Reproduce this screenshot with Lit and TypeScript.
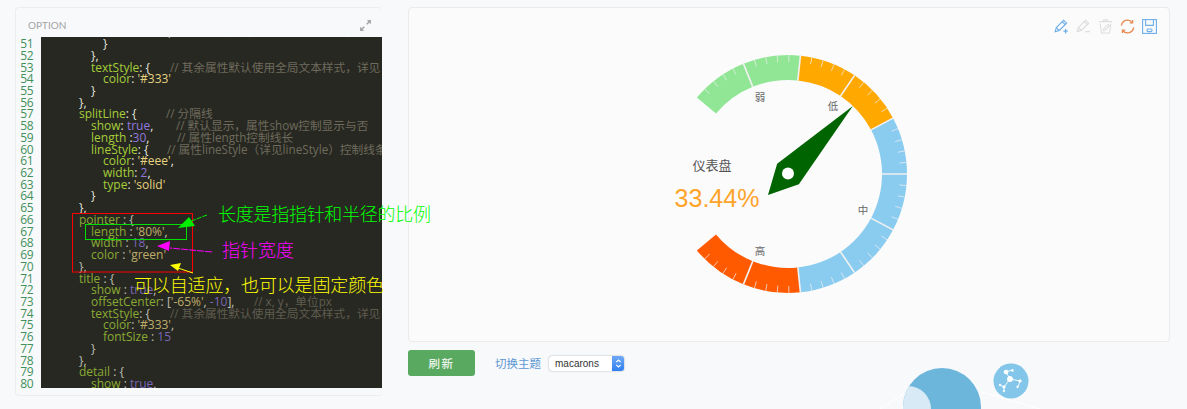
import { LitElement, html, css, svg } from "lit";
import { customElement } from "lit/decorators.js";

type Tok = [string, string];
interface Line { n: number; lvl: number; toks: Tok[]; c?: string; cx?: number; dim?: boolean }

const K = "k", P = "p", S = "s", N = "n";
const COMMA = "\uFF0C", LP = "\uFF08", RP = "\uFF09";
const CODE: Line[] = [
  { n: 50, lvl: 2, toks: [[K, "color"], [P, ": "], [S, "'auto'"], [P, ","]], c: `// 默认显示${COMMA}属性show控制显示与否`, cx: 165 },
  { n: 51, lvl: 2, toks: [[P, "}"]] },
  { n: 52, lvl: 1, toks: [[P, "},"]] },
  { n: 53, lvl: 1, toks: [[K, "textStyle"], [P, ": {"]], c: `// 其余属性默认使用全局文本样式${COMMA}详见`, cx: 170 },
  { n: 54, lvl: 2, toks: [[K, "color"], [P, ": "], [S, "'#333'"]] },
  { n: 55, lvl: 1, toks: [[P, "}"]] },
  { n: 56, lvl: 0, toks: [[P, "},"]] },
  { n: 57, lvl: 0, toks: [[K, "splitLine"], [P, ": {"]], c: "// 分隔线", cx: 166 },
  { n: 58, lvl: 1, toks: [[K, "show"], [P, ": "], [N, "true"], [P, ","]], c: `// 默认显示${COMMA}属性show控制显示与否`, cx: 176 },
  { n: 59, lvl: 1, toks: [[K, "length"], [P, " :"], [N, "30"], [P, ","]], c: "// 属性length控制线长", cx: 177 },
  { n: 60, lvl: 1, toks: [[K, "lineStyle"], [P, ": {"]], c: `// 属性lineStyle${LP}详见lineStyle${RP}控制线条样式`, cx: 167 },
  { n: 61, lvl: 2, toks: [[K, "color"], [P, ": "], [S, "'#eee'"], [P, ","]] },
  { n: 62, lvl: 2, toks: [[K, "width"], [P, ": "], [N, "2"], [P, ","]] },
  { n: 63, lvl: 2, toks: [[K, "type"], [P, ": "], [S, "'solid'"]] },
  { n: 64, lvl: 1, toks: [[P, "}"]] },
  { n: 65, lvl: 0, toks: [[P, "},"]] },
  { n: 66, lvl: 0, dim: true, toks: [[K, "pointer"], [P, " : {"]] },
  { n: 67, lvl: 1, dim: true, toks: [[K, "length"], [P, " : "], [S, "'80%'"], [P, ","]] },
  { n: 68, lvl: 1, dim: true, toks: [[K, "width"], [P, " : "], [N, "18"], [P, ","]] },
  { n: 69, lvl: 1, dim: true, toks: [[K, "color"], [P, " : "], [S, "'green'"]] },
  { n: 70, lvl: 0, dim: true, toks: [[P, "},"]] },
  { n: 71, lvl: 0, dim: true, toks: [[K, "title"], [P, " : {"]] },
  { n: 72, lvl: 1, dim: true, toks: [[K, "show"], [P, " : "], [N, "true"], [P, ","]] },
  { n: 73, lvl: 1, dim: true, toks: [[K, "offsetCenter"], [P, ": ["], [S, "'-65%'"], [P, ", "], [N, "-10"], [P, "],"]], c: `// x, y${COMMA}单位px`, cx: 254 },
  { n: 74, lvl: 1, dim: true, toks: [[K, "textStyle"], [P, ": {"]], c: `// 其余属性默认使用全局文本样式${COMMA}详见`, cx: 170 },
  { n: 75, lvl: 2, dim: true, toks: [[K, "color"], [P, ": "], [S, "'#333'"], [P, ","]] },
  { n: 76, lvl: 2, dim: true, toks: [[K, "fontSize"], [P, " : "], [N, "15"]] },
  { n: 77, lvl: 1, dim: true, toks: [[P, "}"]] },
  { n: 78, lvl: 0, dim: true, toks: [[P, "},"]] },
  { n: 79, lvl: 0, dim: true, toks: [[K, "detail"], [P, " : {"]] },
  { n: 80, lvl: 1, dim: true, toks: [[K, "show"], [P, " : "], [N, "true"], [P, ","]] },
];

const CX = 788, CY = 174, RO = 119, RI = 94;
const pt = (deg: number, r: number): [number, number] => {
  const a = (deg * Math.PI) / 180;
  return [CX + r * Math.cos(a), CY - r * Math.sin(a)];
};
const f = (n: number) => n.toFixed(2);
const sector = (from: number, to: number) => {
  const [a, b] = pt(from, RO), [c, d] = pt(to, RO), [e, g] = pt(to, RI), [h, i] = pt(from, RI);
  const large = from - to > 180 ? 1 : 0;
  return `M${f(a)} ${f(b)}A${RO} ${RO} 0 ${large} 1 ${f(c)} ${f(d)}L${f(e)} ${f(g)}A${RI} ${RI} 0 ${large} 0 ${f(h)} ${f(i)}Z`;
};
const START = 140, SWEEP = 280;
const BANDS: [number, number, string][] = [
  [0, 0.2, "#90e695"],
  [0.2, 0.4, "#ffa800"],
  [0.4, 0.8, "#8accf0"],
  [0.8, 1, "#ff5a00"],
];
const LABELS: [number, number, string][] = [
  [760, 97, "弱"],
  [833, 106, "低"],
  [863, 210, "中"],
  [760, 251, "高"],
];

function gauge() {
  const ang = (t: number) => START - t * SWEEP;
  const bands = BANDS.map(([a, b, col]) => svg`<path d=${sector(ang(a), ang(b))} fill=${col}></path>`);
  const ticks = [];
  for (let i = 1; i < 50; i++) {
    const d = ang(i / 50);
    if (i % 5 === 0) {
      const [x1, y1] = pt(d, RO), [x2, y2] = pt(d, RI);
      ticks.push(svg`<line x1=${f(x1)} y1=${f(y1)} x2=${f(x2)} y2=${f(y2)} stroke="#f1f1f1" stroke-width="1.6"></line>`);
    } else {
      const [x1, y1] = pt(d, RO), [x2, y2] = pt(d, RO - 7);
      ticks.push(svg`<line x1=${f(x1)} y1=${f(y1)} x2=${f(x2)} y2=${f(y2)} stroke="#f1f1f1" stroke-width="0.9" opacity="0.8"></line>`);
    }
  }
  const pa = ang(0.3344);
  const tip = pt(pa, 94), tail = pt(pa + 180, 29), s1 = pt(pa + 90, 15), s2 = pt(pa - 90, 15);
  const needle = [tip, s2, tail, s1].map((p) => p.map(f).join(",")).join(" ");
  return svg`<svg class="gauge" viewBox="408 7 762 335" width="762" height="335">
    ${bands}${ticks}
    ${LABELS.map(([x, y, t]) => svg`<text class="lbl" x=${x} y=${y + 4} text-anchor="middle">${t}</text>`)}
    <polygon points=${needle} fill="#006400"></polygon>
    <circle cx=${CX} cy=${CY - 0.5} r="6" fill="#fff"></circle>
    <text class="title" x="712" y="170" text-anchor="middle">仪表盘</text>
    <text class="detail" x="717" y="207" text-anchor="middle">33.44%</text>
  </svg>`;
}

const icons = [
  html`<svg viewBox="0 0 15 15" width="15" height="15" fill="none" stroke="#6eaee8" stroke-width="1.1"><path d="M1.2 12.6 2.3 8.6 9.6 1.3 12.6 4.2 5.3 11.5Z"/><path d="M2.3 8.6 5.3 11.5M8.3 2.7 11.2 5.6"/><path d="M11.6 10v4.4M9.4 12.2h4.4" stroke-width="1.3"/></svg>`,
  html`<svg viewBox="0 0 15 15" width="15" height="15" fill="none" stroke="#dcdcdc" stroke-width="1.1"><path d="M1.2 12.6 2.3 8.6 9.6 1.3 12.6 4.2 5.3 11.5Z"/><path d="M2.3 8.6 5.3 11.5M8.3 2.7 11.2 5.6"/><path d="M9.4 12.6h4.4" stroke-width="1.3"/></svg>`,
  html`<svg viewBox="0 0 15 15" width="15" height="15" fill="none" stroke="#dedede" stroke-width="1.1"><path d="M1 2.6h13M5 2.4 5.6.9h3.8l.6 1.5"/><path d="M2.2 4.8 3.4 14h8.2l1.2-9.2"/><path d="M5.4 11.6 6 9.2 10 5.4l1.4 1.4-4 3.9Z"/></svg>`,
  html`<svg viewBox="0 0 15 15" width="15" height="15" fill="none" stroke="#e8894f" stroke-width="1.3"><path d="M1.4 6.6A6.1 6.1 0 0 1 12.2 3.4"/><path d="M13.6 8.4A6.1 6.1 0 0 1 2.8 11.6"/><path d="M12.6.9V3.9H9.7M2.4 14.1V11.1H5.3"/></svg>`,
  html`<svg viewBox="0 0 15 15" width="15" height="15" fill="none" stroke="#6eaee8" stroke-width="1.1"><rect x=".6" y=".6" width="13.8" height="13.8"/><path d="M3.6.8V6.4H11.4V.8" /><rect x="5" y="10" width="5" height="2.6" rx="1"/></svg>`,
];

@customElement("app-root")
export class AppRoot extends LitElement {
  static styles = css`
    :host {
      display: block;
      height: 409px;
      overflow: hidden;
      background: #f8f9fb;
      font-family: "Liberation Sans", "Noto Sans CJK SC", sans-serif;
    }
    .page {
      display: grid;
      grid-template-columns: 367px 762px;
      column-gap: 26px;
      padding: 7px 0 0 15px;
      align-items: start;
    }
    .left {
      position: relative;
      z-index: 1;
      height: 389px;
      box-sizing: border-box;
      border: 1px solid #eceded;
      border-right: none;
      border-radius: 4px;
      background: #f8f9fb;
      display: flex;
      flex-direction: column;
    }
    .head {
      height: 29px;
      box-sizing: border-box;
      flex: none;
      display: flex;
      align-items: center;
      justify-content: space-between;
      padding: 5px 11px 0 12px;
      color: #a3a3a3;
      font: 10px Lato, "Liberation Sans", sans-serif;
    }
    .head svg { display: block; }
    .editor {
      height: 351px;
      flex: none;
      display: grid;
      grid-template-columns: 25px 341px;
      overflow: hidden;
      font: 500 12px/11.72px "Open Sans", "Noto Sans CJK SC", sans-serif;
    }
    .gutter {
      margin-top: -10.6px;
      padding-right: 8px;
      text-align: right;
      color: #42905a;
      font-weight: 400;
      letter-spacing: -0.5px;
    }
    .gutter div { height: 11.72px; }
    .code {
      background: #272822;
      overflow: hidden;
    }
    .code-in { margin-top: -10.6px; padding-left: 38px; }
    .row { height: 11.72px; white-space: pre; }
    .row.dim { opacity: 0.78; }
    .part { display: inline-block; }
    .k { color: #a6ce39; }
    .p { color: #e4e4dc; }
    .s { color: #e6d27f; }
    .n { color: #9178de; }
    .c { color: #6f6b5c; font-size: 11.7px; font-weight: 400; }
    .notes {
      position: absolute;
      left: -1px;
      top: -1px;
      overflow: visible;
      pointer-events: none;
    }
    .notes text {
      font: 300 18px "Noto Sans CJK SC", sans-serif;
    }
    .right { min-width: 0; }
    .panel {
      position: relative;
      height: 335px;
      box-sizing: border-box;
      border: 1px solid #ebebeb;
      border-radius: 4px;
      background: #fbfbfc;
      overflow: hidden;
    }
    .gauge { display: block; margin: -1px; }
    .lbl { font: 10.5px "Noto Sans CJK SC", sans-serif; fill: #666; }
    .title { font: 13px "Noto Sans CJK SC", sans-serif; fill: #555; }
    .detail { font: 25px "Liberation Sans", sans-serif; fill: #ffa42a; }
    .tools {
      position: absolute;
      top: 11px;
      right: 12px;
      display: flex;
      gap: 7px;
    }
    .tools svg { display: block; }
    .bar {
      position: relative;
      margin-top: 8px;
      display: flex;
      align-items: center;
    }
    .btn {
      width: 67px;
      height: 26px;
      display: flex;
      align-items: center;
      justify-content: center;
      background: #5aa960;
      border-radius: 3px;
      color: #eaf4ea;
      font-size: 11.5px;
      font-weight: 500;
      letter-spacing: 1.5px;
    }
    .theme {
      margin-left: 20px;
      color: #5b97d3;
      font-size: 11.5px;
    }
    .sel {
      margin-left: 8px;
      width: 75px;
      height: 15px;
      margin-top: 1px;
      display: flex;
      align-items: center;
      justify-content: space-between;
      background: #fff;
      border-radius: 3px;
      box-shadow: 0 0 1.5px rgba(0, 0, 0, 0.45);
      font: 10px "Liberation Sans", sans-serif;
      color: #333;
      box-sizing: border-box;
      padding-left: 6px;
      overflow: hidden;
    }
    .chev {
      width: 12px;
      height: 15px;
      background: linear-gradient(#6fa9f7, #2f7ff0);
      display: flex;
      align-items: center;
      justify-content: center;
    }
    .deco {
      position: absolute;
      left: 472px;
      top: -10px;
    }
  `;

  render() {
    return html`<div class="page">
      <section class="left">
        <div class="head">
          <span>OPTION</span>
          <svg viewBox="0 0 12 12" width="11" height="11" fill="#a8a8a8"><path d="M12 0H7.4l1.7 1.7-2.4 2.4 1.2 1.2 2.4-2.4L12 4.6Z"/><path d="M0 12h4.6l-1.7-1.7 2.4-2.4-1.2-1.2-2.4 2.4L0 7.4Z"/></svg>
        </div>
        <div class="editor">
          <div class="gutter">${CODE.map((l) => html`<div>${l.n}</div>`)}</div>
          <div class="code"><div class="code-in">
            ${CODE.map((l) => {
              const x0 = 12 * l.lvl;
              const toks = l.toks.map(([c, t]) => html`<span class=${c}>${t}</span>`);
              return html`<div class="row ${l.dim ? "dim" : ""}" style="padding-left:${x0}px">${
                l.c
                  ? html`<span class="part" style="width:${(l.cx as number) - 79 - x0}px">${toks}</span><span class="c">${l.c}</span>`
                  : toks
              }</div>`;
            })}
          </div></div>
        </div>
        <svg class="notes" viewBox="15 7 440 389" width="440" height="389">
          <rect x="72.5" y="213.5" width="120" height="58.5" fill="none" stroke="#ff0000" stroke-width="1"></rect>
          <rect x="85.5" y="224.5" width="101" height="15" fill="none" stroke="#00e000" stroke-width="1"></rect>
          <path d="M207 215 186 223" stroke="#00ee00" stroke-dasharray="5 1" fill="none"></path>
          <polygon points="178,228 189,217 195,226" fill="#00ee00"></polygon>
          <path d="M212 252 170 248" stroke="#ff00ff" stroke-dasharray="7 1" fill="none"></path>
          <polygon points="157,246 170,241 169,251" fill="#ff00ff"></polygon>
          <path d="M193 273 178 268" stroke="#ffff00" fill="none"></path>
          <polygon points="170,265 181,263 178,271" fill="#ffff00"></polygon>
          <text x="218" y="220.5" fill="#00ff00" textLength="213">长度是指指针和半径的比例</text>
          <text x="222" y="257" fill="#ff00ff">指针宽度</text>
          <text x="134" y="292" fill="#ffff00" textLength="250">${`可以自适应${COMMA}也可以是固定颜色`}</text>
        </svg>
      </section>
      <div class="right">
        <section class="panel">
          ${gauge()}
          <div class="tools">${icons}</div>
        </section>
        <div class="bar">
          <div class="btn">刷新</div>
          <span class="theme">切换主题</span>
          <div class="sel">
            <span>macarons</span>
            <span class="chev"><svg viewBox="0 0 8 12" width="7" height="11" fill="none" stroke="#fff" stroke-width="1.3"><path d="M1.5 4.5 4 2l2.5 2.5M1.5 7.5 4 10l2.5-2.5"/></svg></span>
          </div>
          <svg class="deco" viewBox="880 340 170 69" width="170" height="69">
            <defs><clipPath id="big"><circle cx="942" cy="407" r="39"></circle></clipPath></defs>
            <path d="M880 409 903 394M982 392 1040 409" stroke="#fff" fill="none"></path>
            <circle cx="942" cy="407" r="39" fill="#6cb6dc"></circle>
            <circle cx="908" cy="409" r="23" fill="#d8eaf5" clip-path="url(#big)"></circle>
            <circle cx="1011" cy="381" r="17.5" fill="#83c6ea"></circle>
            <g stroke="#fff" stroke-width="0.9" fill="#fff">
              <path d="M1010 379 1006 372 1012 370M1010 379 1020 381 1018 387M1010 379 1004 387 1000 385M1004 387 1004 391" fill="none"></path>
              <circle cx="1010" cy="379" r="2.6"></circle>
              <circle cx="1006" cy="372" r="1.9"></circle>
              <circle cx="1012.5" cy="370.5" r="0.9"></circle>
              <circle cx="1020" cy="381" r="1.2"></circle>
              <circle cx="1017.5" cy="387" r="0.8"></circle>
              <circle cx="1004" cy="387" r="1.2"></circle>
              <circle cx="1000" cy="385" r="0.8"></circle>
              <circle cx="1004" cy="391" r="0.8"></circle>
            </g>
          </svg>
        </div>
      </div>
    </div>`;
  }
}
